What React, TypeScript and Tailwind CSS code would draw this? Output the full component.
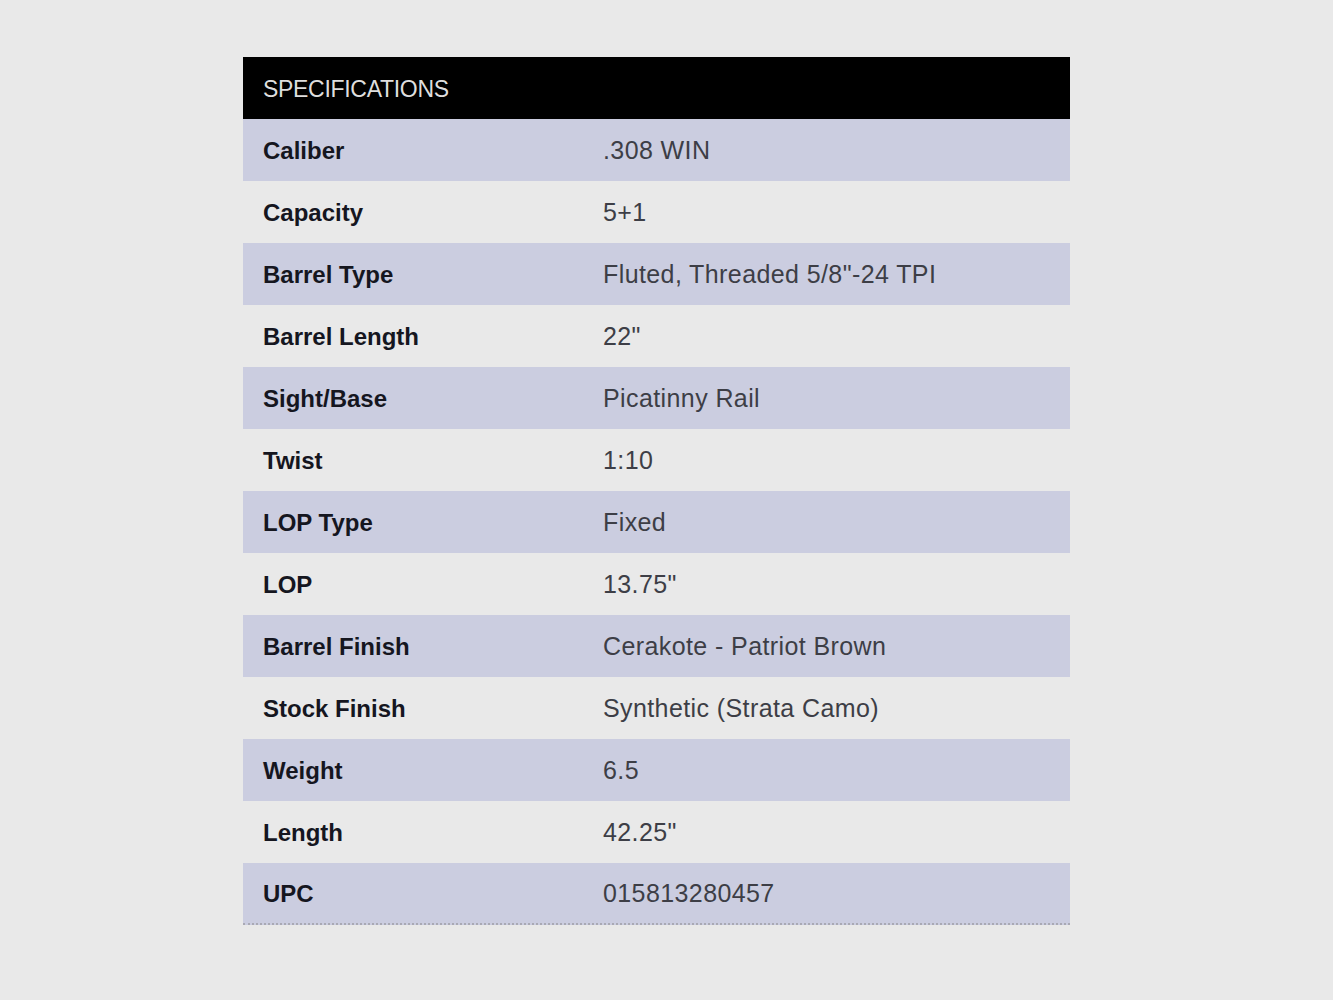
import React from 'react';

const specs = [
  { label: 'Caliber', value: '.308 WIN' },
  { label: 'Capacity', value: '5+1' },
  { label: 'Barrel Type', value: 'Fluted, Threaded 5/8"-24 TPI' },
  { label: 'Barrel Length', value: '22"' },
  { label: 'Sight/Base', value: 'Picatinny Rail' },
  { label: 'Twist', value: '1:10' },
  { label: 'LOP Type', value: 'Fixed' },
  { label: 'LOP', value: '13.75"' },
  { label: 'Barrel Finish', value: 'Cerakote - Patriot Brown' },
  { label: 'Stock Finish', value: 'Synthetic (Strata Camo)' },
  { label: 'Weight', value: '6.5' },
  { label: 'Length', value: '42.25"' },
  { label: 'UPC', value: '015813280457' },
];

const App = () => {
  return (
    <div className="min-h-screen bg-[#e9e9e9] pt-[57px] font-['Liberation_Sans',Arial,sans-serif]">
      <div className="ml-[243px] w-[827px]">
        {/* Header */}
        <div className="h-[62px] bg-black flex items-center pl-5 pt-[2px]">
          <span className="text-[23px] text-[#dedede] tracking-[-0.3px]">SPECIFICATIONS</span>
        </div>

        {/* Rows */}
        {specs.map((row, index) => (
          <div
            key={row.label}
            className={`h-[62px] grid grid-cols-[360px_1fr] items-center pt-[2px] ${
              index % 2 === 0 ? 'bg-[#cbcde0]' : 'bg-[#e9e9e9]'
            } ${index === specs.length - 1 ? 'border-b-2 border-dotted border-[#a9a9b4]' : ''}`}
          >
            <span className="pl-5 text-[24px] font-bold text-[#15161f]">{row.label}</span>
            <span className="text-[25px] text-[#3d3e46] tracking-[0.4px]">{row.value}</span>
          </div>
        ))}
      </div>
    </div>
  );
};

export default App;
